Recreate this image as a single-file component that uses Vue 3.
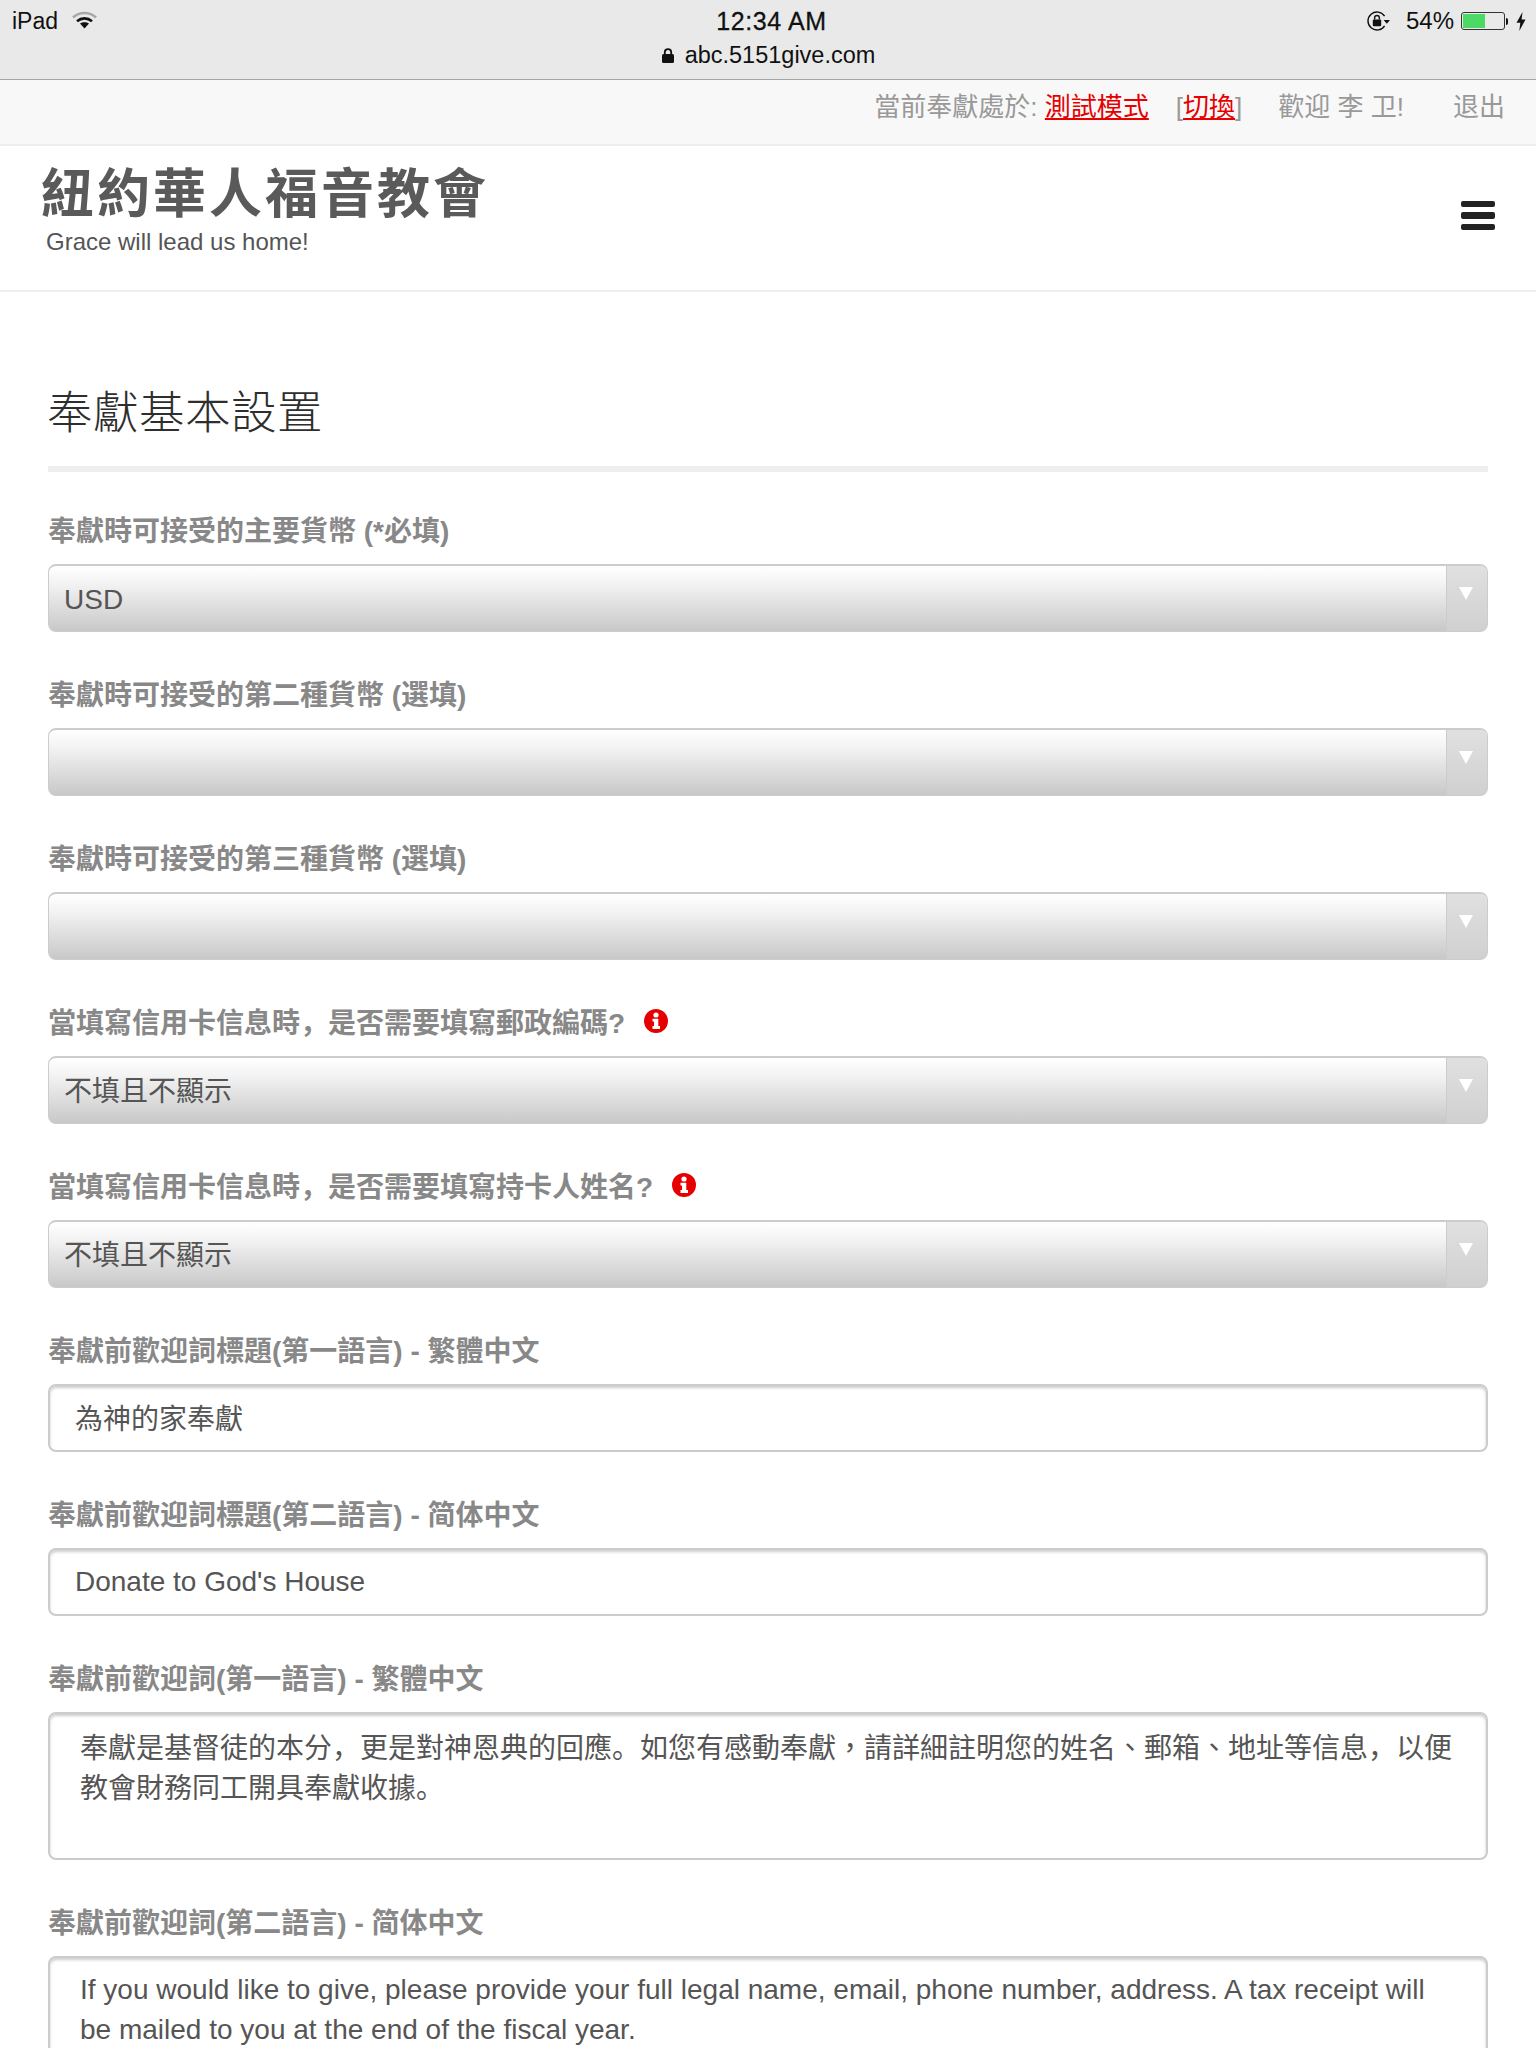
<script setup>
const selects = [
  { label: '奉獻時可接受的主要貨幣 (*必填)', value: 'USD' },
  { label: '奉獻時可接受的第二種貨幣 (選填)', value: '' },
  { label: '奉獻時可接受的第三種貨幣 (選填)', value: '' },
  { label: '當填寫信用卡信息時，是否需要填寫郵政編碼?', value: '不填且不顯示', info: true },
  { label: '當填寫信用卡信息時，是否需要填寫持卡人姓名?', value: '不填且不顯示', info: true }
]
const inputs = [
  { label: '奉獻前歡迎詞標題(第一語言) - 繁體中文', value: '為神的家奉獻', cjk: true },
  { label: '奉獻前歡迎詞標題(第二語言) - 简体中文', value: "Donate to God's House" }
]
// Segments in even positions use the default face; odd positions hold the centred punctuation.
const areas = [
  {
    label: '奉獻前歡迎詞(第一語言) - 繁體中文',
    lines: [
      ['奉獻是基督徒的本分，更是對神恩典的回應。如您有感動奉獻', '，', '請詳細註明您的姓名', '、', '郵箱', '、', '地址等信息，以便'],
      ['教會財務同工開具奉獻收據。']
    ]
  },
  {
    label: '奉獻前歡迎詞(第二語言) - 简体中文',
    lines: [
      ['If you would like to give, please provide your full legal name, email, phone number, address. A tax receipt will'],
      ['be mailed to you at the end of the fiscal year.']
    ]
  }
]
</script>

<template>
  <div class="page">
    <div class="status">
      <div class="status-row">
        <div class="status-left">
          <span>iPad</span>
          <svg class="wifi" width="25" height="18" viewBox="0 0 25 18">
            <path d="M1 6.5 C7.5 0.5 17.5 0.5 24 6.5" fill="none" stroke="#a8a8a8" stroke-width="2.6" />
            <path d="M5 10.2 C9.5 6.4 15.5 6.4 20 10.2" fill="none" stroke="#111" stroke-width="2.6" />
            <path d="M12.5 17.5 L8 12.6 C10.5 10.8 14.5 10.8 17 12.6 Z" fill="#111" />
          </svg>
        </div>
        <div class="clock">12:34 AM</div>
        <div class="status-right">
          <svg width="25" height="20" viewBox="0 0 25 20">
            <path d="M17.6 14.8 A9 9 0 1 1 17.6 5.2" fill="none" stroke="#111" stroke-width="1.4" />
            <path d="M16.6 9 H23 L19.8 12.8 Z" fill="#111" />
            <rect x="5.8" y="8.5" width="8.4" height="6.8" rx="1" fill="#111" />
            <path d="M7.65 8.5 V6.8 A2.35 2.35 0 0 1 12.35 6.8 V8.5" fill="none" stroke="#111" stroke-width="1.4" />
          </svg>
          <span class="pct">54%</span>
          <div class="battery"><div class="battery-fill"></div></div>
          <div class="nub"></div>
          <svg class="bolt" width="10" height="19" viewBox="0 0 10 19">
            <path d="M6.5 0 L0.5 10.8 H4.3 L3.3 19 L9.5 7.6 H5.6 Z" fill="#111" />
          </svg>
        </div>
      </div>
      <div class="url">
        <svg width="14" height="15" viewBox="0 0 14 15">
          <rect x="1" y="6" width="12" height="9" rx="1.5" fill="#111" />
          <path d="M3.8 6 V4.4 A3.2 3.2 0 0 1 10.2 4.4 V6" fill="none" stroke="#111" stroke-width="1.8" />
        </svg>
        <span>abc.5151give.com</span>
      </div>
    </div>

    <div class="topnav">
      <span>當前奉獻處於: <a class="red">測試模式</a></span>
      <span class="switch">[<a class="red">切換</a>]</span>
      <span class="welcome">歡迎 李 卫!</span>
      <span class="logout">退出</span>
    </div>

    <header class="brand">
      <div>
        <div class="brand-title">紐約華人福音教會</div>
        <div class="brand-sub">Grace will lead us home!</div>
      </div>
      <div class="burger"><i></i><i></i><i></i></div>
    </header>

    <main class="main">
      <h1 class="heading">奉獻基本設置</h1>

      <div v-for="s in selects" :key="s.label" class="field">
        <label class="label">
          {{ s.label }}
          <svg v-if="s.info" class="info" width="24" height="24" viewBox="0 0 24 24">
            <circle cx="12" cy="12" r="12" fill="#e60000" />
            <circle cx="12" cy="6" r="2.6" fill="#fff" />
            <path d="M8.5 9.8 H14.3 V17 H16 V20 H8.5 V17 H10 V12.6 H8.5 Z" fill="#fff" />
          </svg>
        </label>
        <div class="select">
          <div class="select-value">{{ s.value }}</div>
          <div class="select-arrow"><span class="tri"></span></div>
        </div>
      </div>

      <div v-for="f in inputs" :key="f.label" class="field">
        <label class="label">{{ f.label }}</label>
        <div class="input" :class="{ cjk: f.cjk }">{{ f.value }}</div>
      </div>

      <div v-for="a in areas" :key="a.label" class="field">
        <label class="label">{{ a.label }}</label>
        <div class="textarea">
          <div v-for="(line, n) in a.lines" :key="n"><span v-for="(seg, i) in line" :key="i" :class="{ tc: i % 2 === 1 }">{{ seg }}</span></div>
        </div>
      </div>
    </main>
  </div>
</template>

<style>
html, body { margin: 0; background: #fff; }
</style>

<style scoped>
.page {
  width: 1536px;
  height: 2048px;
  overflow: hidden;
  background: #fff;
  font-family: "Liberation Sans", "Noto Sans CJK SC", sans-serif;
  color: #555;
}
.status {
  height: 79px;
  background: #e9e9e9;
  border-bottom: 1px solid #a6a6a6;
  color: #111;
  position: relative;
}
.status-row {
  height: 42px;
  display: grid;
  grid-template-columns: 1fr auto 1fr;
  align-items: center;
  padding: 0 10px 0 12px;
  font-size: 23px;
}
.status-left { display: flex; align-items: center; gap: 14px; }
.wifi { margin-top: -2px; }
.clock {
  font-size: 25px;
  font-weight: 500;
  -webkit-text-stroke: 0.3px #111;
  letter-spacing: 0.6px;
  margin-left: 5px;
}
.status-right { display: flex; align-items: center; justify-content: flex-end; }
.pct { margin: 0 7px 0 14px; font-size: 24px; }
.battery {
  width: 44px;
  height: 18px;
  box-sizing: border-box;
  border: 1px solid #333;
  border-radius: 3px;
  padding: 1px;
}
.battery-fill { width: 22px; height: 100%; background: #4cd964; }
.nub { width: 2px; height: 7px; background: #111; margin-left: 1px; border-radius: 0 2px 2px 0; }
.bolt { margin-left: 8px; }
.url {
  display: flex;
  justify-content: center;
  align-items: center;
  gap: 10px;
  height: 26px;
  font-size: 23.5px;
}
.topnav {
  background: #f8f8f8;
  border-bottom: 2px solid #eee;
  display: flex;
  justify-content: flex-end;
  align-items: center;
  padding: 0 31px 16px 0;
  height: 48px;
  font-size: 26px;
  color: #999;
}
.red { color: #e60000; text-decoration: underline; }
.switch { margin-left: 27px; }
.welcome { margin-left: 36px; }
.logout { margin-left: 49px; }
.brand {
  height: 146px;
  box-sizing: border-box;
  border-bottom: 2px solid #eee;
  display: flex;
  justify-content: space-between;
  align-items: flex-start;
  padding: 17px 41px 0 41px;
}
.brand-title {
  font-size: 53px;
  font-weight: 700;
  line-height: 64px;
  letter-spacing: 3px;
  color: #5a5a5a;
}
.brand-sub { font-size: 24px; line-height: 30px; margin: 0 0 0 5px; color: #555; }
.burger { display: flex; flex-direction: column; gap: 5px; margin-top: 38px; width: 34px; }
.burger i { display: block; height: 6.4px; background: #222; border-radius: 2px; }
.main { padding: 95px 48px 0; }
.heading {
  margin: 0 0 37px;
  font-size: 45.5px;
  font-weight: 300;
  line-height: 54px;
  letter-spacing: 0.5px;
  color: #2e2e2e;
  padding-bottom: 25px;
  border-bottom: 6px solid #eee;
  text-indent: -1px;
}
.field { margin-bottom: 41px; }
.label {
  display: flex;
  align-items: center;
  gap: 11px;
  height: 40px;
  margin-bottom: 15px;
  font-size: 28px;
  font-weight: 700;
  color: #888;
  white-space: pre;
}
.info { flex: none; }
.select {
  height: 68px;
  box-sizing: border-box;
  display: flex;
  border: 1px solid #ccc;
  border-top-width: 2px;
  border-radius: 8px;
  overflow: hidden;
  background: linear-gradient(#fff 0%, #f4f4f4 25%, #c8c8c8 100%);
}
.select-value {
  flex: 1;
  padding-left: 15px;
  font-size: 28px;
  line-height: 67px;
  color: #555;
}
.select-arrow {
  width: 41px;
  border-left: 1px solid #ccc;
  background: linear-gradient(#e0e0e0, #d0d0d0);
  display: flex;
  justify-content: center;
  padding-top: 21px;
  box-sizing: border-box;
}
.tri {
  width: 0;
  height: 0;
  margin-left: -3px;
  border-left: 7px solid transparent;
  border-right: 7px solid transparent;
  border-top: 13px solid #fff;
}
.input, .textarea {
  box-sizing: border-box;
  border: 2px solid #ccc;
  border-radius: 8px;
  box-shadow: inset 0 2px 3px rgba(0, 0, 0, 0.2);
  font-size: 28px;
  color: #555;
  background: #fff;
}
.input {
  height: 68px;
  padding-left: 25px;
  line-height: 64px;
}
.input.cjk { line-height: 68px; }
.textarea {
  height: 148px;
  padding: 12px 30px;
  line-height: 40px;
  white-space: nowrap;
}
.tc { font-family: "Noto Sans CJK TC", sans-serif; }
</style>
